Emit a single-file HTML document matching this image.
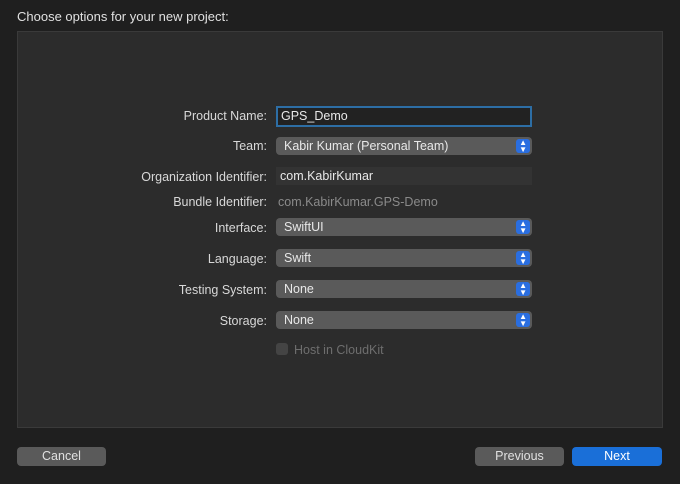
<html><head><style>
body{margin:0;width:680px;height:484px;background:#1f1f1f;font-family:"Liberation Sans",sans-serif;font-size:12.5px;color:#dcdcdc;position:relative;overflow:hidden}
.a{position:absolute}
.panel{left:17px;top:31px;width:644px;height:395px;background:#2c2c2c;border:1px solid #3a3a3a}
.lbl{position:absolute;right:413px;text-align:right;white-space:nowrap;color:#d8d8d8}
.f{position:absolute;left:276px;width:256px;height:18px;box-sizing:border-box;line-height:18px;padding-left:8px;color:#e8e8e8}
.pop{background:#5a5a5a;border-radius:4px}
.pop::after{content:"";position:absolute;right:2px;top:2px;width:14px;height:14px;background:#2a6ee0;border-radius:3px}
.pop b{position:absolute;right:5px;top:0;font-weight:normal;font-size:8px;line-height:7px;color:#fff;z-index:2;padding-top:2px}
.btn{position:absolute;top:447px;height:19px;line-height:19px;text-align:center;border-radius:4px;background:#5a5a5a;color:#e0e0e0;font-size:12.5px}
</style></head><body>
<div class="a" style="left:17px;top:9px;font-size:13px;color:#e0e0e0">Choose options for your new project:</div>
<div class="a panel"></div>
<div class="lbl" style="top:109px">Product Name:</div>
<div class="f" style="top:106px;height:21px;border:2px solid #2d6ea5;background:#222;padding-left:3px;line-height:17px">GPS_Demo</div>
<div class="lbl" style="top:139px">Team:</div>
<div class="f pop" style="top:137px">Kabir Kumar (Personal Team)<b>▲<br>▼</b></div>
<div class="lbl" style="top:170px">Organization Identifier:</div>
<div class="f" style="top:167px;background:#333;padding-left:4px">com.KabirKumar</div>
<div class="lbl" style="top:195px">Bundle Identifier:</div>
<div class="a" style="left:278px;top:195px;color:#8a8a8a">com.KabirKumar.GPS-Demo</div>
<div class="lbl" style="top:221px">Interface:</div>
<div class="f pop" style="top:218px">SwiftUI<b>▲<br>▼</b></div>
<div class="lbl" style="top:252px">Language:</div>
<div class="f pop" style="top:249px">Swift<b>▲<br>▼</b></div>
<div class="lbl" style="top:283px">Testing System:</div>
<div class="f pop" style="top:280px">None<b>▲<br>▼</b></div>
<div class="lbl" style="top:314px">Storage:</div>
<div class="f pop" style="top:311px">None<b>▲<br>▼</b></div>
<div class="a" style="left:276px;top:343px;width:12px;height:12px;background:#444;border-radius:3px"></div>
<div class="a" style="left:294px;top:343px;color:#6e6e6e">Host in CloudKit</div>
<div class="btn" style="left:17px;width:89px">Cancel</div>
<div class="btn" style="left:475px;width:89px">Previous</div>
<div class="btn" style="left:572px;width:90px;background:#1a6fd8;color:#fff">Next</div>
</body></html>
